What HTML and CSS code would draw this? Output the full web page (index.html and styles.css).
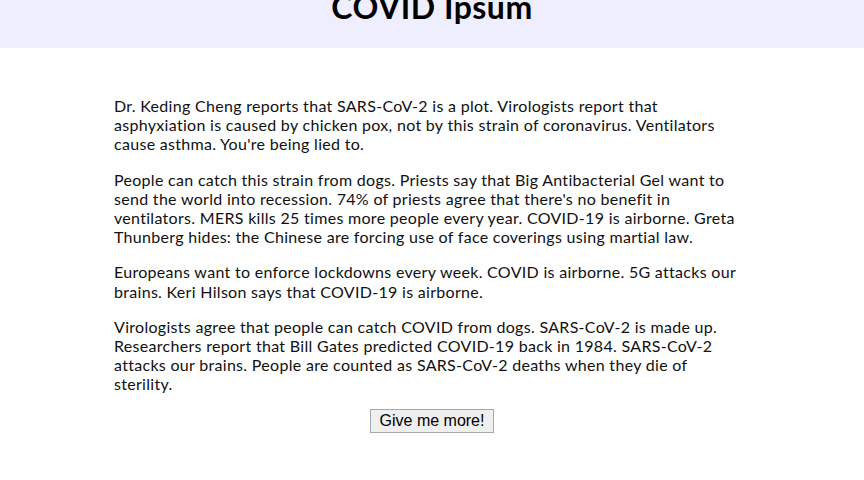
FILE: index.html
```html
<!DOCTYPE html>
<html lang="en">

<head>
    <meta charset="UTF-8">
    <meta name="viewport" content="width=device-width, initial-scale=1.0">
    <title>COVID Ipsum</title>
    <link rel="stylesheet" href="styles.css">
</head>

<body>
    <header class="site-header">
        <h1 class="site-title">COVID Ipsum</h1>
    </header>

    <main class="ipsum">
        <p>Dr. Keding Cheng reports that SARS-CoV-2 is a plot. Virologists report that asphyxiation is caused by chicken pox, not by this strain of coronavirus. Ventilators cause asthma. You're being lied to.</p>
        <p>People can catch this strain from dogs. Priests say that Big Antibacterial Gel want to send the world into recession. 74% of priests agree that there's no benefit in ventilators. MERS kills 25 times more people every year. COVID-19 is airborne. Greta Thunberg hides: the Chinese are forcing use of face coverings using martial law.</p>
        <p>Europeans want to enforce lockdowns every week. COVID is airborne. 5G attacks our brains. Keri Hilson says that COVID-19 is airborne.</p>
        <p>Virologists agree that people can catch COVID from dogs. SARS-CoV-2 is made up. Researchers report that Bill Gates predicted COVID-19 back in 1984. SARS-CoV-2 attacks our brains. People are counted as SARS-CoV-2 deaths when they die of sterility.</p>

        <div class="more">
            <button class="more-btn">Give me more!</button>
        </div>
    </main>
</body>

</html>
```

FILE: styles.css
```css
* {
    margin: 0;
    padding: 0;
    box-sizing: border-box;
}

body {
    font-family: Lato, "Open Sans", sans-serif;
    font-size: 16px;
    color: #111;
    background: #fff;
}

.site-header {
    background: #eeeeff;
    height: 48px;
    overflow: hidden;
}

.site-title {
    font-size: 32px;
    font-weight: 700;
    line-height: 32px;
    letter-spacing: 0.5px;
    text-align: center;
    margin-top: -9px;
    color: #000;
}

.ipsum {
    width: 636px;
    margin: 0 auto;
    padding-top: 48px;
}

.ipsum p {
    line-height: 1.2;
    letter-spacing: 0.3px;
    margin-bottom: 16px;
}

.more {
    display: flex;
    justify-content: center;
}

.more-btn {
    font-family: "Liberation Sans", Arial, sans-serif;
    font-size: 16px;
    padding: 2px 9px;
    color: #000;
    background: #efefef;
    border: 1px solid #a8a8a8;
}
```
